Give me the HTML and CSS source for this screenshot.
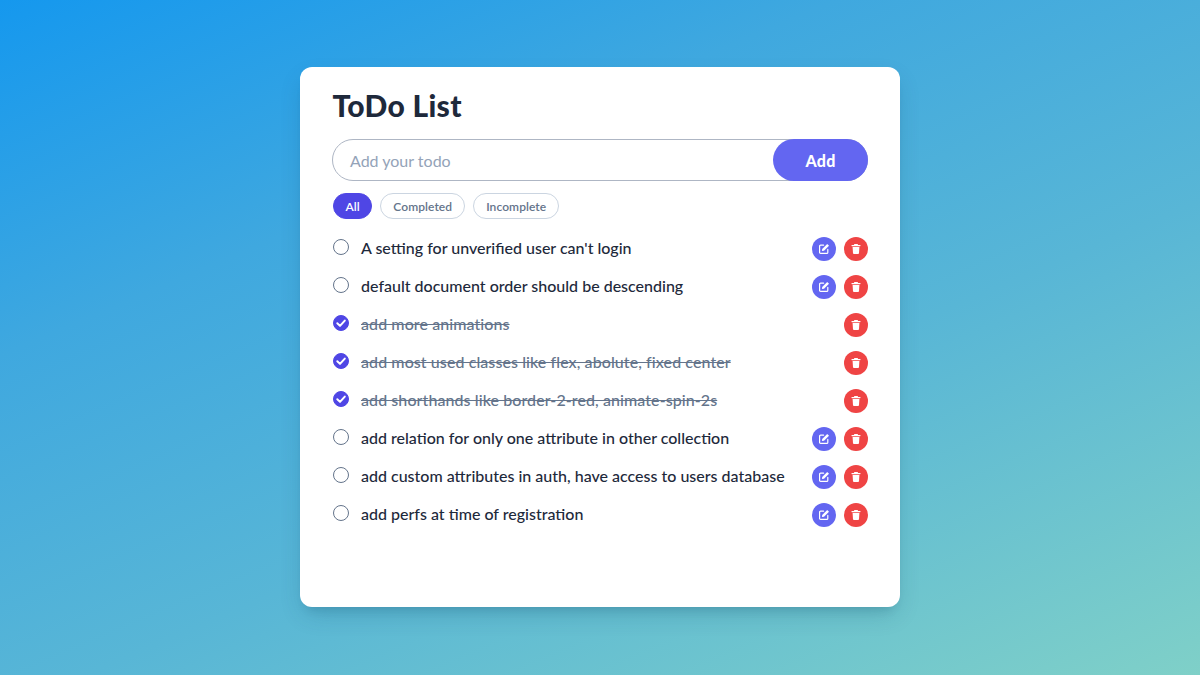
FILE: index.html
```html
<!DOCTYPE html>
<html lang="en">
<head>
<meta charset="utf-8">
<title>ToDo List</title>
<link rel="stylesheet" href="styles.css">
</head>
<body>
<svg class="defs" width="0" height="0" aria-hidden="true">
  <symbol id="pen" viewBox="0 0 12 12"><path d="M5.6 2.2H2.6A1 1 0 0 0 1.6 3.2V9.4A1 1 0 0 0 2.6 10.4H8.8A1 1 0 0 0 9.8 9.4V6.4" fill="none" stroke="#fff" stroke-width="1.2" stroke-linecap="round"/><path d="M9.2 1 11 2.8 6 7.8 3.9 8.1 4.2 6Z" fill="#fff"/></symbol>
  <symbol id="bin" viewBox="0 0 12 12"><path d="M4.4 1h3.2l.5 1H10a.6.6 0 0 1 0 1.200H2a.6.6 0 0 1 0-1.200H3.900ZM2.600 4H9.400L9 10.200A1 1 0 0 1 8 11H4A1 1 0 0 1 3 10.200Z" fill="#fff"/></symbol>
  <symbol id="tick" viewBox="0 0 16 16"><path d="M4.300 8.300 7 10.900 11.800 5.600" fill="none" stroke="#fff" stroke-width="2" stroke-linecap="round" stroke-linejoin="round"/></symbol>
</svg>
<main class="card">
  <h1 class="title">ToDo List</h1>
  <form class="entry">
    <span class="placeholder">Add your todo</span>
    <span class="add">Add</span>
  </form>
  <div class="filters">
    <span class="chip active">All</span>
    <span class="chip">Completed</span>
    <span class="chip">Incomplete</span>
  </div>
  <ul class="list">
    <li class="row"><span class="radio"></span><span class="text">A setting for unverified user can't login</span><span class="round edit"><svg class="ico"><use href="#pen"/></svg></span><span class="round del"><svg class="ico"><use href="#bin"/></svg></span></li>
    <li class="row"><span class="radio"></span><span class="text">default document order should be descending</span><span class="round edit"><svg class="ico"><use href="#pen"/></svg></span><span class="round del"><svg class="ico"><use href="#bin"/></svg></span></li>
    <li class="row"><span class="radio on"><svg class="tick"><use href="#tick"/></svg></span><span class="text done">add more animations</span><span class="round del"><svg class="ico"><use href="#bin"/></svg></span></li>
    <li class="row"><span class="radio on"><svg class="tick"><use href="#tick"/></svg></span><span class="text done">add most used classes like flex, abolute, fixed center</span><span class="round del"><svg class="ico"><use href="#bin"/></svg></span></li>
    <li class="row"><span class="radio on"><svg class="tick"><use href="#tick"/></svg></span><span class="text done">add shorthands like border-2-red, animate-spin-2s</span><span class="round del"><svg class="ico"><use href="#bin"/></svg></span></li>
    <li class="row"><span class="radio"></span><span class="text">add relation for only one attribute in other collection</span><span class="round edit"><svg class="ico"><use href="#pen"/></svg></span><span class="round del"><svg class="ico"><use href="#bin"/></svg></span></li>
    <li class="row"><span class="radio"></span><span class="text">add custom attributes in auth, have access to users database</span><span class="round edit"><svg class="ico"><use href="#pen"/></svg></span><span class="round del"><svg class="ico"><use href="#bin"/></svg></span></li>
    <li class="row"><span class="radio"></span><span class="text">add perfs at time of registration</span><span class="round edit"><svg class="ico"><use href="#pen"/></svg></span><span class="round del"><svg class="ico"><use href="#bin"/></svg></span></li>
  </ul>
</main>
</body>
</html>
```
FILE: styles.css
```css
* { box-sizing: border-box; }
html, body { margin: 0; height: 100%; }
body {
  display: flex;
  align-items: center;
  justify-content: center;
  overflow: hidden;
  padding-bottom: 1px;
  background: linear-gradient(157deg, #1598ee 0%, #3fa8df 30%, #58b6d6 60%, #7fd0c8 100%);
  font-family: "Lato", "Open Sans", sans-serif;
  color: #1e293b;
}
.defs { position: absolute; }
.card {
  width: 600px;
  height: 540px;
  padding: 20px 32px 0;
  background: #fff;
  border-radius: 12px;
  box-shadow: 0 10px 25px -5px rgba(15, 70, 100, .24), 0 8px 10px -6px rgba(15, 70, 100, .16);
}
.title { margin: 0; font-size: 30px; line-height: 36px; font-weight: 900; letter-spacing: .3px; padding-left: .5px; }
.entry {
  display: flex;
  align-items: center;
  justify-content: space-between;
  height: 42px;
  margin-top: 16px;
  padding-left: 17px;
  border: 1px solid #aeb6c4;
  border-radius: 21px;
}
.placeholder { font-size: 16px; color: #94a3b8; letter-spacing: 0; }
.add {
  display: flex;
  align-items: center;
  justify-content: center;
  width: 95px;
  height: 42px;
  margin-right: -1px;
  background: #6366f1;
  border-radius: 21px;
  color: #fff;
  font-size: 16px;
  font-weight: 900;
  letter-spacing: .2px;
}
.filters { display: flex; gap: 8px; margin-top: 12px; padding-left: 1px; }
.chip {
  display: flex;
  align-items: center;
  height: 26px;
  padding: 0 12px;
  border: 1px solid #cbd5e1;
  border-radius: 13px;
  font-size: 12px;
  font-weight: 600;
  color: #64748b;
  letter-spacing: .08px;
}
.chip.active { background: #4f46e5; border-color: #4f46e5; color: #fff; padding: 0 11.5px; }
.list { list-style: none; margin: 11px 0 0; padding: 0; }
.row { display: flex; align-items: center; height: 38px; }
.radio {
  flex: none;
  width: 16px;
  height: 16px;
  margin-right: 12px;
  margin-top: -4px;
  margin-left: 1px;
  border: 1px solid #64748b;
  border-radius: 50%;
}
.radio.on { background: #4f46e5; border-color: #4f46e5; position: relative; }
.tick { position: absolute; left: -1px; top: -1px; width: 16px; height: 16px; }
.text { flex: 1; font-size: 16px; font-weight: 500; letter-spacing: 0; margin-top: -4px; }
.text.done { color: #64748b; text-decoration: line-through; letter-spacing: .08px; }
.round {
  flex: none;
  display: flex;
  align-items: center;
  justify-content: center;
  width: 24px;
  height: 24px;
  border-radius: 50%;
}
.edit { background: #6366f1; margin-right: 8px; }
.del { background: #ef4444; }
.ico { width: 12px; height: 12px; }
```
